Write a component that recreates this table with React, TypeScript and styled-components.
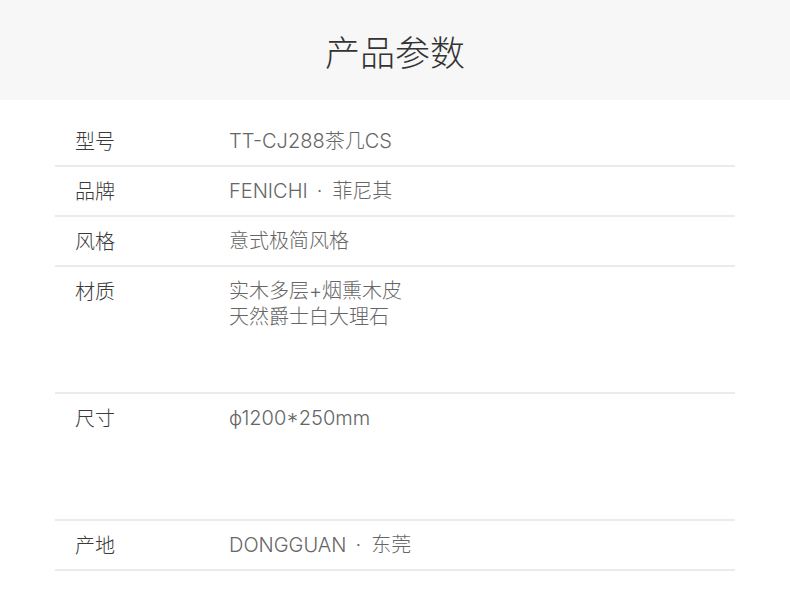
import React from "react";
import styled, { createGlobalStyle } from "styled-components";

const GlobalStyle = createGlobalStyle`
  body {
    margin: 0;
    background: #ffffff;
    font-family: Inter, "Noto Sans CJK SC", sans-serif;
  }
`;

const Header = styled.div`
  height: 100px;
  background: #f7f7f7;
  display: flex;
  align-items: center;
  justify-content: center;
`;

const Title = styled.h1`
  margin: 0;
  font-family: "Noto Sans CJK SC", sans-serif;
  font-size: 35px;
  font-weight: 300;
  color: #333333;
`;

const Table = styled.div`
  margin: 0 55px;
  padding-top: 17px;
`;

interface RowProps {
  tall?: boolean;
}

const Row = styled.div<RowProps>`
  display: flex;
  align-items: flex-start;
  box-sizing: border-box;
  height: ${(props) => (props.tall ? "127px" : "50px")};
  padding-top: 11px;
  border-bottom: 2px solid #ebebeb;
`;

const Label = styled.div`
  width: 174px;
  padding-left: 20px;
  box-sizing: border-box;
  font-family: "Noto Sans CJK SC", sans-serif;
  font-size: 20px;
  font-weight: 300;
  line-height: 26px;
  color: #3a3a3a;
`;

const Value = styled.div`
  flex: 1;
  font-size: 20px;
  font-weight: 300;
  line-height: 26px;
  color: #666666;
`;

const Sep = styled.span`
  display: inline-block;
  margin: 0 10px 0 9px;
`;

interface Spec {
  label: string;
  lines: string[];
  tall?: boolean;
}

const specs: Spec[] = [
  { label: "型号", lines: ["TT-CJ288茶几CS"] },
  { label: "品牌", lines: ["FENICHI·菲尼其"] },
  { label: "风格", lines: ["意式极简风格"] },
  { label: "材质", lines: ["实木多层+烟熏木皮", "天然爵士白大理石"], tall: true },
  { label: "尺寸", lines: ["ф1200*250mm"], tall: true },
  { label: "产地", lines: ["DONGGUAN·东莞"] },
];

// split "A·B" so the dot gets its own spacing
const renderLine = (line: string) => {
  const parts = line.split("·");
  if (parts.length < 2) return line;
  return (
    <>
      {parts[0]}
      <Sep>·</Sep>
      {parts[1]}
    </>
  );
};

const App: React.FC = () => {
  return (
    <>
      <GlobalStyle />
      <Header>
        <Title>产品参数</Title>
      </Header>
      <Table>
        {specs.map((spec) => (
          <Row key={spec.label} tall={spec.tall}>
            <Label>{spec.label}</Label>
            <Value>
              {spec.lines.map((line) => (
                <div key={line}>{renderLine(line)}</div>
              ))}
            </Value>
          </Row>
        ))}
      </Table>
    </>
  );
};

export default App;
